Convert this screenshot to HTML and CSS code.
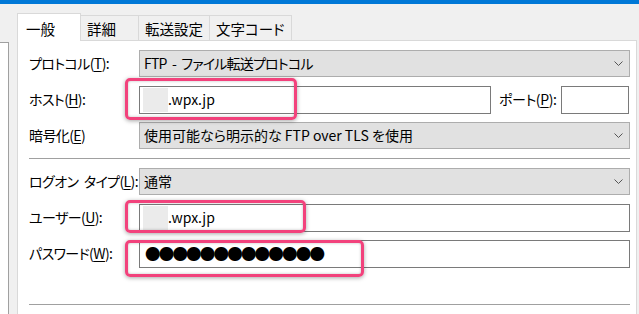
FILE: index.html
```html
<!DOCTYPE html>
<html>
<head>
<meta charset="utf-8">
<link rel="stylesheet" href="styles.css">
</head>
<body>
<div class="m-titleBar"></div>
<div class="m-window">
    <div class="m-side"></div>
    <div class="m-tabCtl">
        <div class="m-tabs">
            <div class="tab z-active">一般</div>
            <div class="tab">詳細</div>
            <div class="tab">転送設定</div>
            <div class="tab">文字コード</div>
        </div>
        <div class="m-panel">
            <div class="row">
                <span class="lbl">プロトコル(<u>T</u>):</span>
                <div class="select"><span class="tight">FTP - ファイル転送プロトコル</span><svg class="chev" width="9" height="5" viewBox="0 0 9 5"><polyline points="0.5,0.5 4.5,4.5 8.5,0.5" fill="none" stroke="#555" stroke-width="1"/></svg></div>
            </div>
            <div class="row">
                <span class="lbl">ホスト(<u>H</u>):</span>
                <div class="input host"><span class="blur"></span>.wpx.jp<span class="mark mark-host"></span></div>
                <span class="lbl-port">ポート(<u>P</u>):</span>
                <div class="input port"></div>
            </div>
            <div class="row">
                <span class="lbl">暗号化(<u>E</u>)</span>
                <div class="select">使用可能なら明示的な FTP over TLS を使用<svg class="chev" width="9" height="5" viewBox="0 0 9 5"><polyline points="0.5,0.5 4.5,4.5 8.5,0.5" fill="none" stroke="#555" stroke-width="1"/></svg></div>
            </div>
            <div class="sep"></div>
            <div class="row">
                <span class="lbl">ログオン タイプ(<u>L</u>):</span>
                <div class="select">通常<svg class="chev" width="9" height="5" viewBox="0 0 9 5"><polyline points="0.5,0.5 4.5,4.5 8.5,0.5" fill="none" stroke="#555" stroke-width="1"/></svg></div>
            </div>
            <div class="row">
                <span class="lbl">ユーザー(<u>U</u>):</span>
                <div class="input"><span class="blur"></span>.wpx.jp<span class="mark mark-user"></span></div>
            </div>
            <div class="row">
                <span class="lbl">パスワード(<u>W</u>):</span>
                <div class="input"><span class="dots">●●●●●●●●●●●●●</span><span class="mark mark-pass"></span></div>
            </div>
            <div class="sep sep-bottom"></div>
        </div>
    </div>
</div>
</body>
</html>
```

FILE: styles.css
```css
html, body {margin: 0; padding: 0; height: 314px; overflow: hidden;}
body {background: #f0f0f0; font: 14px/1.4 "Noto Sans CJK JP", "Noto Sans", sans-serif; font-feature-settings: "palt"; color: #000;}
u {text-decoration: underline; text-underline-offset: 2px;}

.m-titleBar {height: 4px; background: #0078d7;}
.m-window {display: flex; align-items: flex-start;}
.m-side {width: 8px; height: 271px; margin-top: 38px; background: #fff; border-top: 1px solid #a0a0a0; border-right: 1px solid #a0a0a0;}
.m-tabCtl {width: 620px; margin-left: 8px;}

.m-tabs {display: flex; align-items: flex-end; height: 28px; margin-top: 9px; margin-bottom: -1px; position: relative; z-index: 1;}
.m-tabs .tab {box-sizing: border-box; min-width: 58px; height: 25px; margin-bottom: 1px; padding: 0 6px; border-top: 1px solid #d9d9d9; border-right: 1px solid #d9d9d9; font-size: 14.5px; line-height: 25px;}
.m-tabs .tab.z-active {width: 64px; height: 28px; margin-bottom: 0; padding: 0 8px; background: #fff; border-left: 1px solid #d9d9d9; line-height: 29px;}

.m-panel {box-sizing: border-box; height: 274px; padding: 9px 6px 0 11px; background: #fff; border: 1px solid #d9d9d9; border-bottom: none;}
.row {display: flex; align-items: center; height: 28px; margin-bottom: 8px;}
.lbl {width: 110px; flex: none; white-space: nowrap; letter-spacing: -0.6px; word-spacing: 3px;}
.lbl-port {width: 62px; flex: none; white-space: nowrap; letter-spacing: -0.4px;}
.tight {letter-spacing: -0.8px; word-spacing: 3px;}

.select {box-sizing: border-box; flex: 1; height: 27px; align-self: flex-start; display: flex; align-items: center; justify-content: space-between; padding: 0 6px 0 4px; background: #e1e1e1; border: 1px solid #adadad;}
.input {box-sizing: border-box; flex: 1; height: 28px; display: flex; align-items: center; padding: 0 3px; background: #fff; border: 1px solid #7a7a7a; position: relative;}
.input.host {flex: none; width: 352px; margin-right: 8px;}
.input.port {flex: none; width: 68px;}

.blur {display: inline-block; width: 25px; height: 24px; background: #ebebeb;}
.dots {font-size: 15.5px; font-feature-settings: normal; padding-left: 2px; letter-spacing: -1.8px;}

.sep {height: 0; border-top: 1px solid #a0a0a0; margin-bottom: 9px;}
.sep-bottom {margin-top: 36px;}

/* 强调框 */
.mark {position: absolute; box-sizing: border-box; border: 3px solid #f2427c; border-radius: 5px; box-shadow: 0 1px 4px rgba(0,0,0,.35), inset 0 0 3px rgba(0,0,0,.25);}
.mark-host {left: -15px; top: -9px; width: 172px; height: 42px;}
.mark-user {left: -15px; top: -5px; width: 181px; height: 33px;}
.mark-pass {left: -15px; top: -1px; width: 239px; height: 37px;}
```
